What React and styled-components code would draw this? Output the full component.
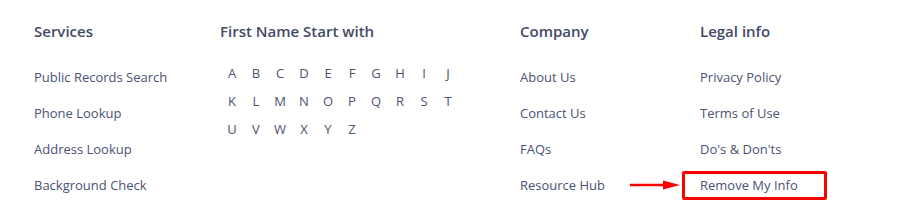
import styled, { createGlobalStyle } from "styled-components";

const GlobalStyle = createGlobalStyle`
  body {
    margin: 0;
    background: #ffffff;
    font-family: "Open Sans", "Noto Sans", sans-serif;
  }
`;

const Footer = styled.footer`
  display: flex;
  padding: 21px 0 0 34px;
  width: 899px;
  height: 213px;
  box-sizing: border-box;
  color: #4b5272;
`;

const Column = styled.div`
  width: ${(p) => p.width}px;
  flex-shrink: 0;
`;

const Heading = styled.h4`
  margin: 0 0 26px;
  font-size: 15px;
  line-height: 20px;
  font-weight: 600;
  color: #434a66;
`;

const LinkList = styled.ul`
  list-style: none;
  margin: 0;
  padding: 0;
  display: flex;
  flex-direction: column;
  gap: 16px;
`;

const Item = styled.li`
  position: relative;
  font-size: 13px;
  line-height: 20px;
`;

const Link = styled.a`
  color: #4b5272;
  text-decoration: none;
`;

const Letters = styled.div`
  display: grid;
  grid-template-columns: repeat(10, 24px);
  row-gap: 8px;
  margin-top: -4px;
`;

const Letter = styled.a`
  font-size: 13px;
  line-height: 20px;
  text-align: center;
  color: #4b5272;
  text-decoration: none;
`;

const Highlight = styled.span`
  position: absolute;
  left: -18px;
  top: -4px;
  width: 145px;
  height: 29px;
  border: 3px solid #ff0000;
  border-radius: 2px;
  box-sizing: border-box;
  pointer-events: none;
`;

const Arrow = styled.svg`
  position: absolute;
  left: -71px;
  top: 0px;
`;

const services = [
  "Public Records Search",
  "Phone Lookup",
  "Address Lookup",
  "Background Check",
];
const company = ["About Us", "Contact Us", "FAQs", "Resource Hub"];
const legal = ["Privacy Policy", "Terms of Use", "Do's & Don'ts", "Remove My Info"];
const alphabet = "ABCDEFGHIJKLMNOPQRSTUVWXYZ".split("");

const App = () => {
  return (
    <>
      <GlobalStyle />
      <Footer>
        <Column width={186}>
          <Heading>Services</Heading>
          <LinkList>
            {services.map((s) => (
              <Item key={s}>
                <Link href="#">{s}</Link>
              </Item>
            ))}
          </LinkList>
        </Column>
        <Column width={300}>
          <Heading>First Name Start with</Heading>
          <Letters>
            {alphabet.map((l) => (
              <Letter key={l} href="#">
                {l}
              </Letter>
            ))}
          </Letters>
        </Column>
        <Column width={180}>
          <Heading>Company</Heading>
          <LinkList>
            {company.map((s) => (
              <Item key={s}>
                <Link href="#">{s}</Link>
              </Item>
            ))}
          </LinkList>
        </Column>
        <Column width={180}>
          <Heading>Legal info</Heading>
          <LinkList>
            {legal.map((s, i) => (
              <Item key={s}>
                <Link href="#">{s}</Link>
                {i === legal.length - 1 && (
                  <>
                    <Arrow width="52" height="20" viewBox="0 0 52 20">
                      <line x1="1" y1="10" x2="36" y2="10" stroke="#ff0000" strokeWidth="2.5" />
                      <polygon points="34,5.5 51,10 34,14.5" fill="#ff0000" />
                    </Arrow>
                    <Highlight />
                  </>
                )}
              </Item>
            ))}
          </LinkList>
        </Column>
      </Footer>
    </>
  );
};

export default App;
